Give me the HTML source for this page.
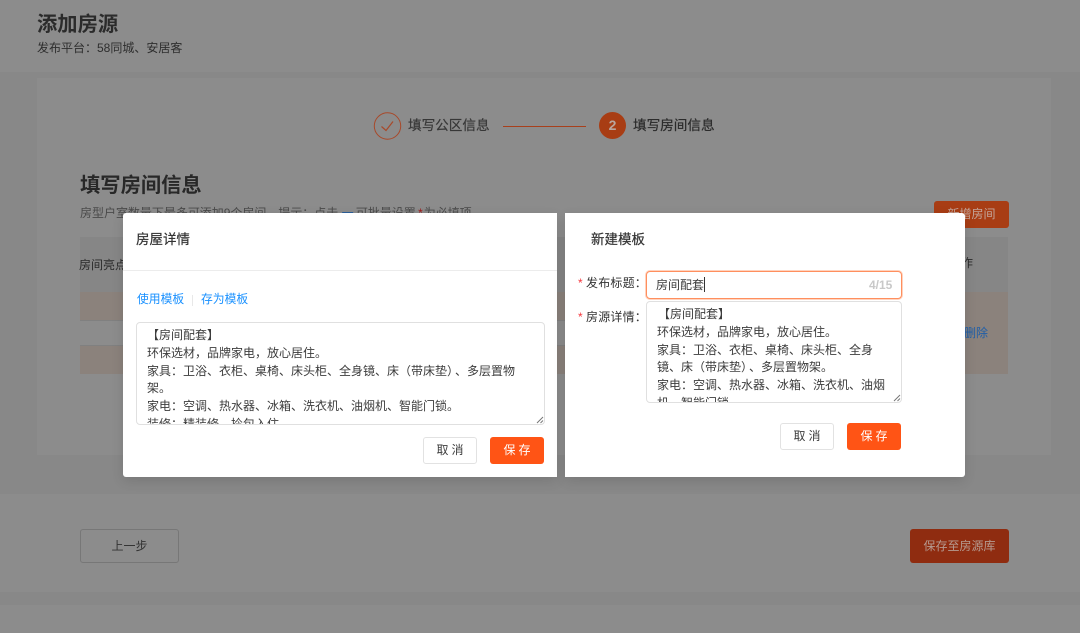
<!DOCTYPE html>
<html lang="zh"><head><meta charset="utf-8"><title>添加房源</title>
<style>
*{box-sizing:border-box}
html,body{margin:0;padding:0;background:#8c8c8c}
body{width:1080px;height:633px;overflow:hidden;position:relative;font-family:"Liberation Sans","Noto Sans CJK SC",sans-serif;color:#333}
#w{position:absolute;left:0;top:0;width:1080px;height:633px;filter:blur(.35px);overflow:hidden}
.a{position:absolute;white-space:nowrap;line-height:1}
.b{position:absolute}
.ta{position:absolute;overflow:hidden;background:#fff;border:1px solid #e0e0e0;border-radius:4px;font-size:12px;line-height:17.8px;color:#3c3c3c}
.ta div{white-space:nowrap}
.grip{position:absolute;width:9px;height:9px}
.btn{position:absolute;width:54px;height:27px;border-radius:3px;font-size:12px;line-height:27px;text-align:center;letter-spacing:3px;text-indent:3px}
.cancel{background:#fff;border:1px solid #e2e2e2;color:#3c3c3c;line-height:25px}
.save{background:#ff5415;color:#fff}
.m{-webkit-text-stroke:.2px currentColor}
</style></head><body>
<div id="w">
<div class="b" style="left:0;top:72px;width:1080px;height:6px;background:#888"></div>
<div class="b" style="left:0;top:78px;width:37px;height:377px;background:#888"></div>
<div class="b" style="left:1051px;top:78px;width:29px;height:377px;background:#888"></div>
<div class="b" style="left:0;top:455px;width:1080px;height:39px;background:#888"></div>
<div class="b" style="left:0;top:592px;width:1080px;height:13px;background:#888"></div>

<div class="a" style="left:37px;top:15px;font-size:20.300px;font-weight:700;color:#2b2b2b">添加房源</div>
<div class="a" style="left:37px;top:42px;font-size:12px;color:#2e2e2e">发布平台：58同城、安居客</div>

<svg class="b" style="left:373px;top:111px" width="30" height="30" viewBox="0 0 30 30"><circle cx="14.500" cy="15" r="13.200" fill="none" stroke="#a8492a" stroke-width="1"/><path d="M8.500 15.500L13 19.500L20 10.500" fill="none" stroke="#a8492a" stroke-width="1.200"/></svg>
<div class="a m" style="left:408px;top:119px;font-size:13.600px;color:#383838">填写公区信息</div>
<div class="b" style="left:503px;top:126px;width:83px;height:1px;background:#a8401c"></div>
<div class="b" style="left:599px;top:112px;width:27px;height:27px;border-radius:50%;background:#a83d14;color:#b9a69e;font-size:14px;line-height:27px;text-align:center;font-weight:700">2</div>
<div class="a m" style="left:633px;top:119px;font-size:13.600px;color:#2b2b2b">填写房间信息</div>

<div class="a" style="left:80px;top:176px;font-size:20.300px;font-weight:700;color:#282828">填写房间信息</div>
<div class="a" style="left:80px;top:207px;font-size:12px;color:#4a4a4a;letter-spacing:-.02px">房型户室数量下最多可添加9个房间，提示：点击 <span style="color:#2a5f9a;margin-right:-1px">一</span> 可批量设置 <span style="color:#a01818;margin-left:-1px">*</span><span style="margin-left:1px">为必填项</span></div>
<div class="b" style="left:934px;top:201px;width:75px;height:27px;background:#a83d14;border-radius:3px;color:#c4a79c;font-size:12px;line-height:27px;text-align:center">新增房间</div>

<div class="b" style="left:80px;top:237px;width:928px;height:55px;background:#868686"></div>
<div class="a" style="left:79px;top:259px;font-size:12px;color:#2b2b2b">房间亮点</div>
<div class="a" style="left:949px;top:257px;font-size:12px;color:#2b2b2b">操作</div>
<div class="b" style="left:80px;top:292px;width:928px;height:28px;background:#8b827c"></div>
<div class="b" style="left:80px;top:320px;width:928px;height:1px;background:#808080"></div>
<div class="b" style="left:80px;top:345px;width:928px;height:1px;background:#808080"></div>
<div class="b" style="left:80px;top:346px;width:928px;height:28px;background:#8b827c"></div>
<div class="b" style="left:900px;top:292px;width:108px;height:82px;background:#8b827c"></div>
<div class="a" style="left:964px;top:327px;font-size:12px;color:#1f5ea8">删除</div>

<div class="b" style="left:80px;top:529px;width:99px;height:34px;border:1px solid #777;border-radius:3px;color:#333;font-size:12px;line-height:32px;text-align:center">上一步</div>
<div class="b" style="left:910px;top:529px;width:99px;height:34px;background:#8f2c10;border-radius:3px;color:#b69a90;font-size:12px;line-height:34px;text-align:center">保存至房源库</div>

<!-- left modal -->
<div class="b" style="left:123px;top:213px;width:434px;height:264px;background:#fff;border-radius:3px 0 0 3px;box-shadow:0 4px 12px rgba(0,0,0,.12)"></div>
<div class="a m" style="left:136px;top:233px;font-size:13.500px;color:#333">房屋详情</div>
<div class="b" style="left:123px;top:270px;width:434px;height:1px;background:#ececec"></div>
<div class="a" style="left:137px;top:294px;font-size:11.800px;color:#1890ff">使用模板</div>
<div class="b" style="left:192px;top:295px;width:1px;height:11px;background:#e8e8e8"></div>
<div class="a" style="left:201px;top:294px;font-size:11.800px;color:#1890ff">存为模板</div>
<div class="ta" style="left:136px;top:322px;width:409px;height:103px;padding:4px 0 0 10px">
<div>【房间配套】</div>
<div>环保选材，品牌家电，放心居住。</div>
<div>家具：卫浴、衣柜、桌椅、床头柜、全身镜、床（带床垫）<span style="margin-left:2px">、多层置物</span></div>
<div>架。</div>
<div>家电：空调、热水器、冰箱、洗衣机、油烟机、智能门锁。</div>
<div>装修：精装修，拎包入住。</div>
<svg class="grip" style="right:0;bottom:0" viewBox="0 0 9 9"><path d="M2 8L8 2M5.500 8L8 5.500" stroke="#777" stroke-width="1"/></svg>
</div>
<div class="btn cancel" style="left:423px;top:437px">取消</div>
<div class="btn save" style="left:490px;top:437px">保存</div>

<!-- right modal -->
<div class="b" style="left:565px;top:213px;width:400px;height:264px;background:#fff;border-radius:0 3px 3px 0;box-shadow:0 4px 12px rgba(0,0,0,.12)"></div>
<div class="a m" style="left:591px;top:233px;font-size:13.500px;color:#333">新建模板</div>
<div class="a" style="left:578px;top:277px;font-size:12px;color:#f5363c">*</div>
<div class="a" style="left:586px;top:277px;font-size:12px;color:#333;letter-spacing:.2px">发布标题：</div>
<div class="a" style="left:578px;top:311px;font-size:12px;color:#f5363c">*</div>
<div class="a" style="left:586px;top:311px;font-size:12px;color:#333;letter-spacing:.2px">房源详情：</div>
<div class="b" style="left:646px;top:271px;width:256px;height:28px;background:#fff;border:1px solid #ff8f5e;border-radius:4px;box-shadow:0 0 0 1px #ffd3bf"></div>
<div class="a" style="left:656px;top:279px;font-size:12px;color:#3c3c3c">房间配套</div>
<div class="b" style="left:704px;top:277px;width:1px;height:15px;background:#333"></div>
<div class="a" style="left:869px;top:279px;font-size:12px;color:#c8c8c8;font-weight:700">4/15</div>
<div class="ta" style="left:646px;top:301px;width:256px;height:102px;padding:4px 0 0 10px">
<div style="text-indent:1px">【房间配套】</div>
<div>环保选材，品牌家电，放心居住。</div>
<div>家具：卫浴、衣柜、桌椅、床头柜、全身</div>
<div>镜、床（带床垫）<span style="margin-left:2px">、多层置物架。</span></div>
<div>家电：空调、热水器、冰箱、洗衣机、油烟</div>
<div>机、智能门锁。</div>
<svg class="grip" style="right:0;bottom:0" viewBox="0 0 9 9"><path d="M2 8L8 2M5.500 8L8 5.500" stroke="#777" stroke-width="1"/></svg>
</div>
<div class="btn cancel" style="left:780px;top:423px">取消</div>
<div class="btn save" style="left:847px;top:423px">保存</div>
</div>
</body></html>
